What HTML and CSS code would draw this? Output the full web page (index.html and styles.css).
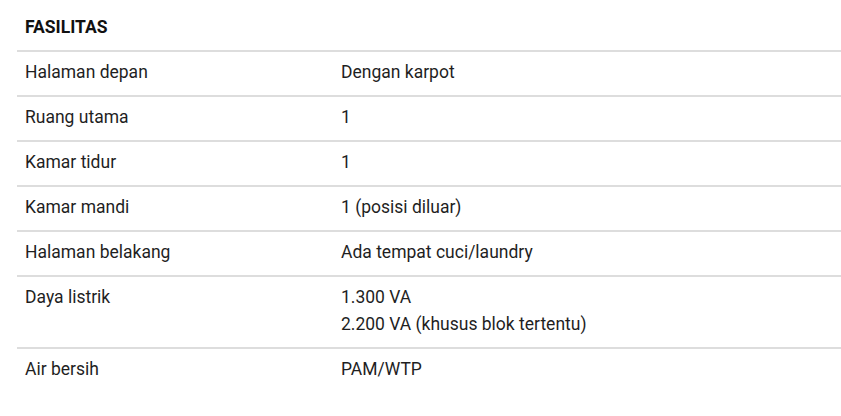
FILE: index.html
```html
<!DOCTYPE html>
<html lang="id">
<head>
<meta charset="utf-8">
<title>Fasilitas</title>
<link rel="stylesheet" href="styles.css">
</head>
<body>
<section class="facilities">
  <div class="fac-head">FASILITAS</div>
  <div class="fac-row"><div class="cell">Halaman depan</div><div class="cell">Dengan karpot</div></div>
  <div class="fac-row"><div class="cell">Ruang utama</div><div class="cell">1</div></div>
  <div class="fac-row"><div class="cell">Kamar tidur</div><div class="cell">1</div></div>
  <div class="fac-row"><div class="cell">Kamar mandi</div><div class="cell">1 (posisi diluar)</div></div>
  <div class="fac-row"><div class="cell">Halaman belakang</div><div class="cell">Ada tempat cuci/laundry</div></div>
  <div class="fac-row"><div class="cell">Daya listrik</div><div class="cell">1.300 VA<br>2.200 VA (khusus blok tertentu)</div></div>
  <div class="fac-row last"><div class="cell">Air bersih</div><div class="cell">PAM/WTP</div></div>
</section>
</body>
</html>
```

FILE: styles.css
```css
html, body {
  margin: 0;
  padding: 0;
  background: #ffffff;
}

body {
  font-family: Roboto, "Liberation Sans", Arial, sans-serif;
  font-size: 17.5px;
  line-height: 27px;
  color: #1f1f1f;
}

.facilities {
  padding: 7px 0 0 17px;
}

.fac-head {
  padding: 7px 8px 9px;
  font-weight: 700;
  color: #111111;
  border-bottom: 2px solid #dddddd;
}

.fac-row {
  display: grid;
  grid-template-columns: 316px 1fr;
  border-bottom: 2px solid #dddddd;
}

.fac-row.last {
  border-bottom: none;
}

.cell {
  padding: 7px 8px 9px;
}
```
